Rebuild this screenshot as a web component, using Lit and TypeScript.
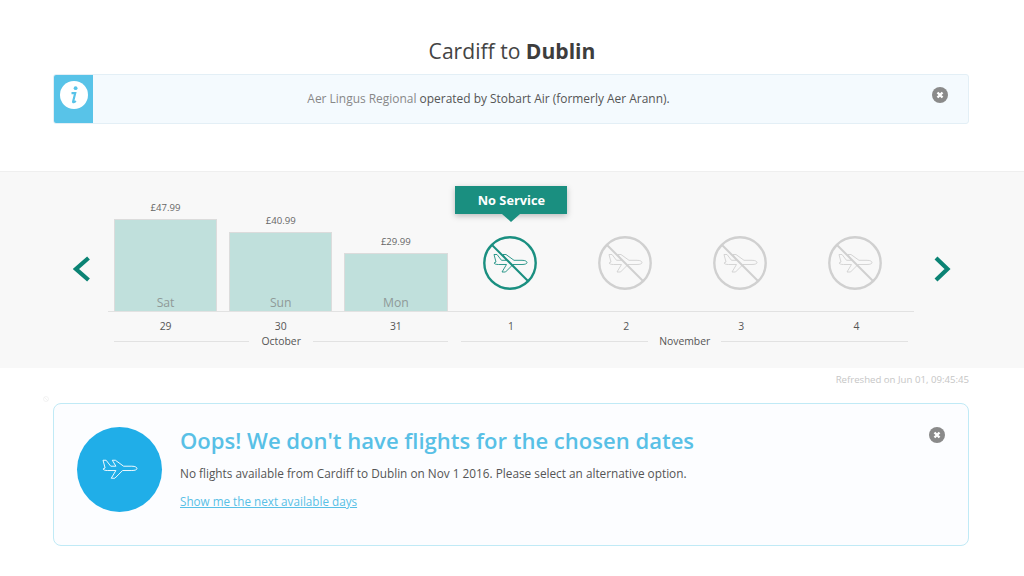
import { LitElement, html, css, svg } from "lit";
import { customElement } from "lit/decorators.js";

const planePath = "M1 1H4L8.5 6.8H13.5L10 1H13L21 6.8H29C32.5 6.8 34 8 34 9C34 10.3 32 11 29 11H20L12.5 18.5H9L13.5 11H5.5C3 11 1.5 10.5 1 9.5L3 8.5Z";

const plane = (cls: string) => svg`<path class=${cls} d=${planePath}/>`;

const closeIcon = html`<svg class="close" viewBox="0 0 16 16"><circle cx="8" cy="8" r="8" fill="#8a8a8a"/><path d="M5.5 5.5L10.5 10.5M10.5 5.5L5.5 10.5" stroke="#fff" stroke-width="2.4" fill="none"/></svg>`;

type Day = { price?: string; h?: number; name?: string; num: string; active?: boolean };
const days: Day[] = [
  { price: "£47.99", h: 92, name: "Sat", num: "29" },
  { price: "£40.99", h: 79, name: "Sun", num: "30" },
  { price: "£29.99", h: 58, name: "Mon", num: "31" },
  { num: "1", active: true },
  { num: "2" },
  { num: "3" },
  { num: "4" },
];

@customElement("app-root")
export class AppRoot extends LitElement {
  static styles = css`
    :host { display: block; width: 1024px; height: 576px; overflow: hidden; background: #fff; font-family: "Open Sans", "Noto Sans", sans-serif; color: #555; position: relative; }
    h1 { margin: 0; height: 74px; box-sizing: border-box; padding-top: 36px; text-align: center; font-size: 21.1px; line-height: 30px; font-weight: 400; color: #444; }
    h1 b { font-weight: 700; color: #3d3d3d; }
    .info { margin: 0 55px 0 53px; height: 50px; box-sizing: border-box; display: flex; align-items: stretch; background: #f4fafe; border: 1px solid #e3eff6; border-radius: 3px; overflow: hidden; }
    .info-side { width: 39px; background: #58c3e8; display: flex; justify-content: center; padding-top: 6px; box-sizing: border-box; flex: none; }
    .info-side svg { width: 28px; height: 28px; }
    .info-text { flex: 1; text-align: center; padding: 15px 48px 0 0; font-size: 11.95px; line-height: 17px; color: #555; }
    .info-text span { color: #888; }
    .close { width: 16px; height: 16px; display: block; flex: none; }
    .info .close { margin: 12px 20px 0 0; }
    .band { margin-top: 47px; height: 197px; box-sizing: border-box; background: #f8f8f8; border-top: 1px solid #efefef; display: flex; }
    .arrow { width: 108px; flex: none; display: flex; justify-content: flex-end; padding: 84px 17px 0 0; box-sizing: border-box; }
    .arrow.right { width: 110px; justify-content: flex-start; padding: 84px 0 0 19px; }
    .arrow svg { width: 18px; height: 26px; }
    .chart { width: 806px; flex: none; }
    .plot { height: 139px; display: grid; grid-template-columns: repeat(7, 1fr); align-items: end; border-bottom: 1px solid #e2e2e2; }
    .col { display: flex; flex-direction: column; align-items: center; position: relative; }
    .price { font-size: 9.6px; line-height: 14px; color: #666; margin-bottom: 4px; }
    .bar { width: 103.4px; box-sizing: border-box; background: #c0e0dc; border: 1px solid #dcdcdc; border-bottom: none; display: flex; align-items: flex-end; justify-content: center; font-size: 12.2px; line-height: 17px; color: #8f9a98; }
    .nosvc { width: 54px; height: 54px; display: block; margin: 0 2px 21px 0; }
    .tip { position: absolute; left: 2px; bottom: 97px; width: 112px; height: 28px; background: #1a8f80; color: #fff; font-weight: 700; font-size: 12.8px; line-height: 28px; text-align: center; box-shadow: 0 2px 6px rgba(0,0,0,.25); }
    .tip::after { content: ""; position: absolute; left: 47px; top: 28px; border: 9px solid transparent; border-bottom: none; border-top: 8px solid #1a8f80; }
    .nums { display: grid; grid-template-columns: repeat(7, 1fr); height: 22px; text-align: center; font-size: 10.4px; line-height: 28px; color: #555; }
    .months { display: grid; grid-template-columns: 3fr 4fr; margin-top: 0; }
    .month { display: flex; align-items: center; gap: 12px; margin: 0 5px 0 6px; font-size: 10.4px; line-height: 15px; color: #555; }
    .month + .month { margin: 0 6px 0 8px; gap: 11px; }
    .month::before, .month::after { content: ""; flex: 1; height: 1px; background: #e2e2e2; }
    .refreshed { margin: 5px 55px 0 0; text-align: right; font-size: 9.63px; line-height: 14px; color: #c6c6c6; }
    .stray { position: absolute; left: 43px; top: 396px; width: 6px; height: 6px; }
    .card { margin: 16px 55px 0 53px; height: 143px; box-sizing: border-box; background: #fcfdff; border: 1px solid #c0eaf6; border-radius: 8px; display: flex; padding: 23px 0 0 23px; }
    .circle { width: 85px; height: 85px; border-radius: 50%; background: #20aee8; flex: none; display: flex; align-items: center; justify-content: center; }
    .circle svg { width: 36px; height: 21px; }
    .body { flex: 1; padding-left: 18px; }
    .body h2 { margin: -1px 0 0; font-size: 22.05px; line-height: 28px; font-weight: 600; color: #58c0e6; }
    .body p { margin: 9px 0 0; font-size: 11.8px; line-height: 20px; color: #555; }
    .body a { display: block; margin-top: 8px; font-size: 11.7px; line-height: 20px; color: #58c0e6; text-decoration: underline; }
    .card .close { margin: 0 23px 0 0; }
    .stroke { fill: none; stroke: #fff; stroke-width: 0.9; stroke-linejoin: round; }
  `;

  private noService(active: boolean) {
    const c = active ? "#1a8f80" : "#d0d0d0";
    return html`<svg class="nosvc" viewBox="0 0 54 54">
      <circle cx="27" cy="27" r="25.7" fill="none" stroke=${c} stroke-width="2.4"/>
      <g transform="translate(10 17.5)" fill="none" stroke=${c} stroke-width="0.9" stroke-linejoin="round">${plane("")}</g>
      <path d="M9 9L45 45" stroke=${c} stroke-width="2"/>
    </svg>`;
  }

  render() {
    return html`
      <h1>Cardiff to <b>Dublin</b></h1>
      <div class="info">
        <div class="info-side">
          <svg viewBox="0 0 28 28"><circle cx="14" cy="14" r="14" fill="#fff"/><circle cx="15.6" cy="7.2" r="1.9" fill="#58c3e8"/><path d="M11.5 12.2H15.2L13.1 20.6C13 21.5 14 21.6 15.8 20" fill="none" stroke="#58c3e8" stroke-width="2.2"/></svg>
        </div>
        <div class="info-text"><span>Aer Lingus Regional</span> operated by Stobart Air (formerly Aer Arann).</div>
        ${closeIcon}
      </div>
      <div class="band">
        <div class="arrow"><svg viewBox="0 0 18 26"><path d="M15.5 2L3 13L15.5 24" fill="none" stroke="#0b8374" stroke-width="4.2"/></svg></div>
        <div class="chart">
          <div class="plot">
            ${days.map((d) => d.h
              ? html`<div class="col"><div class="price">${d.price}</div><div class="bar" style="height:${d.h}px">${d.name}</div></div>`
              : html`<div class="col">${this.noService(!!d.active)}${d.active ? html`<div class="tip">No Service</div>` : null}</div>`)}
          </div>
          <div class="nums">${days.map((d) => html`<div>${d.num}</div>`)}</div>
          <div class="months"><div class="month">October</div><div class="month">November</div></div>
        </div>
        <div class="arrow right"><svg viewBox="0 0 18 26"><path d="M3 2L14.5 13L3 24" fill="none" stroke="#0b8374" stroke-width="4.2"/></svg></div>
      </div>
      <div class="refreshed">Refreshed on Jun 01, 09:45:45</div>
      <svg class="stray" viewBox="0 0 6 6"><circle cx="3" cy="3" r="2.5" fill="none" stroke="#eee" stroke-width=".7"/><path d="M1 1L5 5" stroke="#eee" stroke-width=".7"/></svg>
      <div class="card">
        <div class="circle"><svg viewBox="0 0 35 20">${plane("stroke")}</svg></div>
        <div class="body">
          <h2>Oops! We don't have flights for the chosen dates</h2>
          <p>No flights available from Cardiff to Dublin on Nov 1 2016. Please select an alternative option.</p>
          <a href="#">Show me the next available days</a>
        </div>
        ${closeIcon}
      </div>
    `;
  }
}
